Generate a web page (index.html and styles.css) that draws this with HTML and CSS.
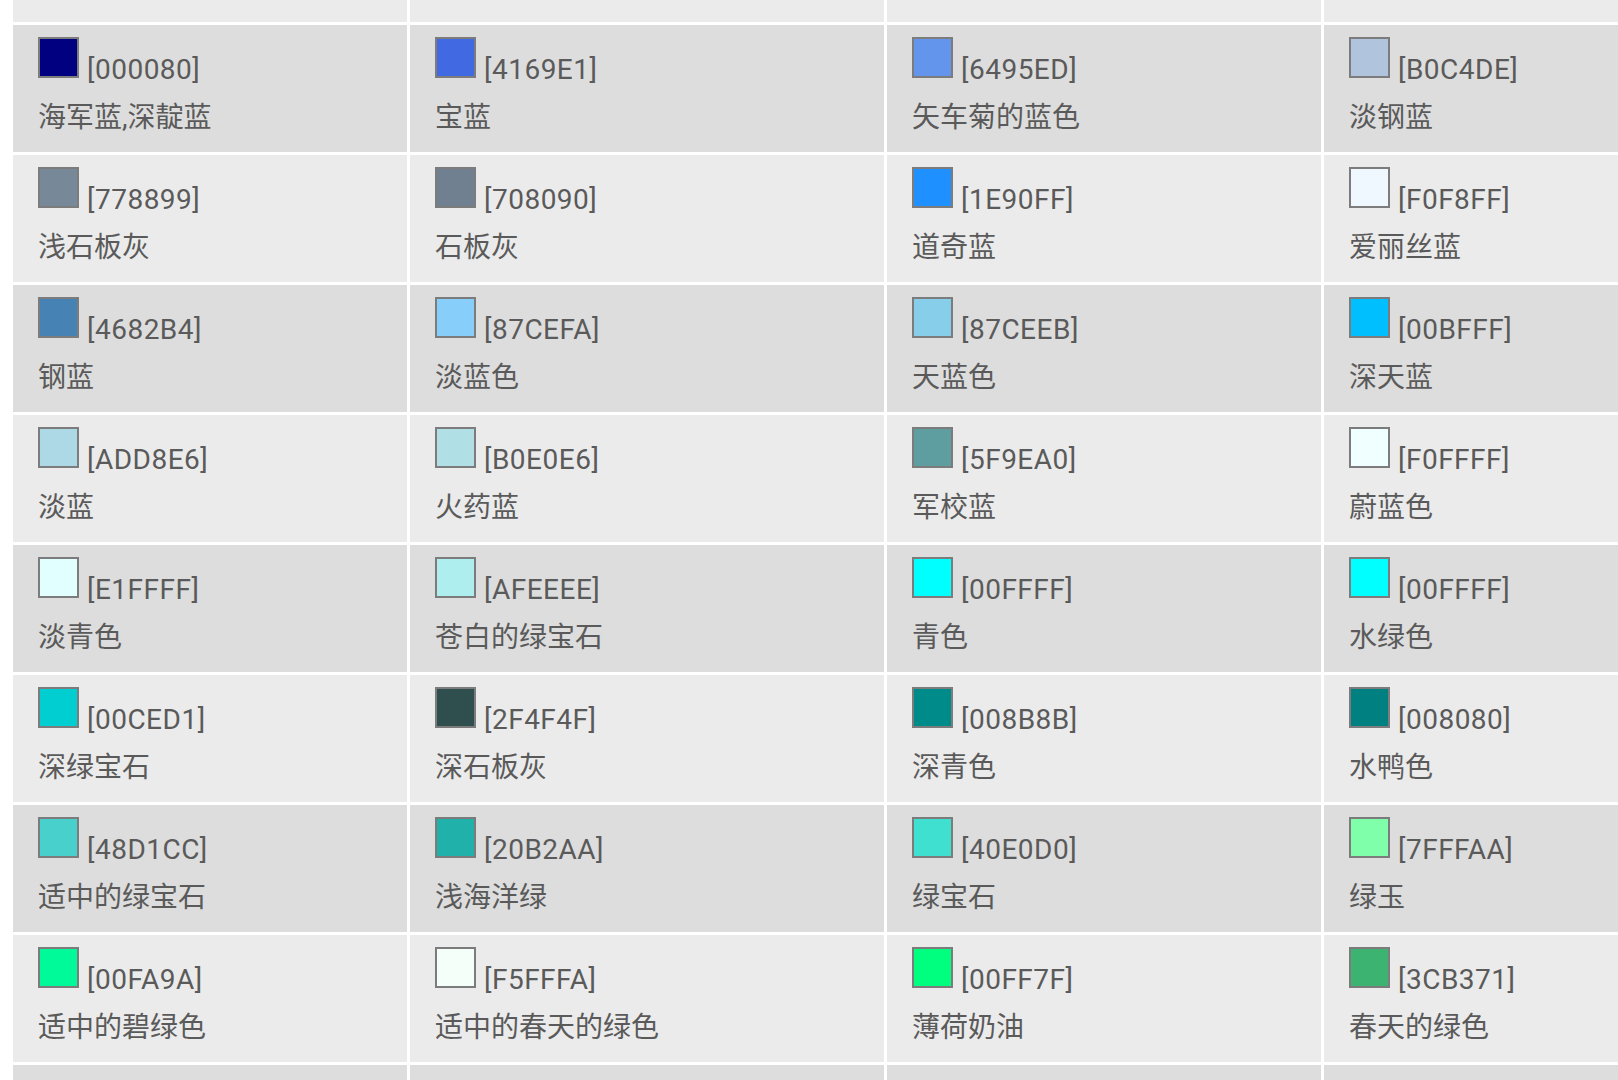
FILE: index.html
```html
<!DOCTYPE html>
<html lang="zh-CN">
<head>
<meta charset="utf-8">
<title>颜色表</title>
<link rel="stylesheet" href="styles.css">
</head>
<body>
<div class="table">
  <div class="cell light spacer"></div><div class="cell light spacer"></div><div class="cell light spacer"></div><div class="cell light spacer"></div>

  <div class="cell dark"><div class="line"><span class="sw" style="background:#000080"></span><span class="code">[000080]</span></div><div class="name">海军蓝,深靛蓝</div></div>
  <div class="cell dark"><div class="line"><span class="sw" style="background:#4169E1"></span><span class="code">[4169E1]</span></div><div class="name">宝蓝</div></div>
  <div class="cell dark"><div class="line"><span class="sw" style="background:#6495ED"></span><span class="code">[6495ED]</span></div><div class="name">矢车菊的蓝色</div></div>
  <div class="cell dark"><div class="line"><span class="sw" style="background:#B0C4DE"></span><span class="code">[B0C4DE]</span></div><div class="name">淡钢蓝</div></div>

  <div class="cell light"><div class="line"><span class="sw" style="background:#778899"></span><span class="code">[778899]</span></div><div class="name">浅石板灰</div></div>
  <div class="cell light"><div class="line"><span class="sw" style="background:#708090"></span><span class="code">[708090]</span></div><div class="name">石板灰</div></div>
  <div class="cell light"><div class="line"><span class="sw" style="background:#1E90FF"></span><span class="code">[1E90FF]</span></div><div class="name">道奇蓝</div></div>
  <div class="cell light"><div class="line"><span class="sw" style="background:#F0F8FF"></span><span class="code">[F0F8FF]</span></div><div class="name">爱丽丝蓝</div></div>

  <div class="cell dark"><div class="line"><span class="sw" style="background:#4682B4"></span><span class="code">[4682B4]</span></div><div class="name">钢蓝</div></div>
  <div class="cell dark"><div class="line"><span class="sw" style="background:#87CEFA"></span><span class="code">[87CEFA]</span></div><div class="name">淡蓝色</div></div>
  <div class="cell dark"><div class="line"><span class="sw" style="background:#87CEEB"></span><span class="code">[87CEEB]</span></div><div class="name">天蓝色</div></div>
  <div class="cell dark"><div class="line"><span class="sw" style="background:#00BFFF"></span><span class="code">[00BFFF]</span></div><div class="name">深天蓝</div></div>

  <div class="cell light"><div class="line"><span class="sw" style="background:#ADD8E6"></span><span class="code">[ADD8E6]</span></div><div class="name">淡蓝</div></div>
  <div class="cell light"><div class="line"><span class="sw" style="background:#B0E0E6"></span><span class="code">[B0E0E6]</span></div><div class="name">火药蓝</div></div>
  <div class="cell light"><div class="line"><span class="sw" style="background:#5F9EA0"></span><span class="code">[5F9EA0]</span></div><div class="name">军校蓝</div></div>
  <div class="cell light"><div class="line"><span class="sw" style="background:#F0FFFF"></span><span class="code">[F0FFFF]</span></div><div class="name">蔚蓝色</div></div>

  <div class="cell dark"><div class="line"><span class="sw" style="background:#E1FFFF"></span><span class="code">[E1FFFF]</span></div><div class="name">淡青色</div></div>
  <div class="cell dark"><div class="line"><span class="sw" style="background:#AFEEEE"></span><span class="code">[AFEEEE]</span></div><div class="name">苍白的绿宝石</div></div>
  <div class="cell dark"><div class="line"><span class="sw" style="background:#00FFFF"></span><span class="code">[00FFFF]</span></div><div class="name">青色</div></div>
  <div class="cell dark"><div class="line"><span class="sw" style="background:#00FFFF"></span><span class="code">[00FFFF]</span></div><div class="name">水绿色</div></div>

  <div class="cell light"><div class="line"><span class="sw" style="background:#00CED1"></span><span class="code">[00CED1]</span></div><div class="name">深绿宝石</div></div>
  <div class="cell light"><div class="line"><span class="sw" style="background:#2F4F4F"></span><span class="code">[2F4F4F]</span></div><div class="name">深石板灰</div></div>
  <div class="cell light"><div class="line"><span class="sw" style="background:#008B8B"></span><span class="code">[008B8B]</span></div><div class="name">深青色</div></div>
  <div class="cell light"><div class="line"><span class="sw" style="background:#008080"></span><span class="code">[008080]</span></div><div class="name">水鸭色</div></div>

  <div class="cell dark"><div class="line"><span class="sw" style="background:#48D1CC"></span><span class="code">[48D1CC]</span></div><div class="name">适中的绿宝石</div></div>
  <div class="cell dark"><div class="line"><span class="sw" style="background:#20B2AA"></span><span class="code">[20B2AA]</span></div><div class="name">浅海洋绿</div></div>
  <div class="cell dark"><div class="line"><span class="sw" style="background:#40E0D0"></span><span class="code">[40E0D0]</span></div><div class="name">绿宝石</div></div>
  <div class="cell dark"><div class="line"><span class="sw" style="background:#7FFFAA"></span><span class="code">[7FFFAA]</span></div><div class="name">绿玉</div></div>

  <div class="cell light"><div class="line"><span class="sw" style="background:#00FA9A"></span><span class="code">[00FA9A]</span></div><div class="name">适中的碧绿色</div></div>
  <div class="cell light"><div class="line"><span class="sw" style="background:#F5FFFA"></span><span class="code">[F5FFFA]</span></div><div class="name">适中的春天的绿色</div></div>
  <div class="cell light"><div class="line"><span class="sw" style="background:#00FF7F"></span><span class="code">[00FF7F]</span></div><div class="name">薄荷奶油</div></div>
  <div class="cell light"><div class="line"><span class="sw" style="background:#3CB371"></span><span class="code">[3CB371]</span></div><div class="name">春天的绿色</div></div>

  <div class="cell dark"></div><div class="cell dark"></div><div class="cell dark"></div><div class="cell dark"></div>
</div>
</body>
</html>
```
FILE: styles.css
```css
html, body {
  margin: 0;
  padding: 0;
  background: #ffffff;
  overflow: hidden;
}

body {
  width: 1618px;
  height: 1080px;
  font-family: Roboto, "Noto Sans CJK SC", sans-serif;
  color: #5a5a5a;
}

.table {
  display: grid;
  grid-template-columns: 394px 474px 434px 320px;
  grid-template-rows: 22px;
  grid-auto-rows: 127px;
  row-gap: 3px;
  column-gap: 3px;
  margin-left: 13px;
}

.cell {
  padding: 12px 0 0 25px;
  box-sizing: border-box;
  overflow: hidden;
}

.spacer {
  padding: 0;
}

.dark {
  background: #dddddd;
}

.light {
  background: #ebebeb;
}

.line {
  font-size: 28px;
  line-height: 28px;
  white-space: nowrap;
}

.sw {
  display: inline-block;
  width: 41px;
  height: 41px;
  box-sizing: border-box;
  border: 2px solid #7c7c7c;
  margin-right: 8px;
  margin-bottom: 1px;
  vertical-align: baseline;
}

.code {
  font-size: 28px;
  letter-spacing: 0.5px;
}

.name {
  font-size: 28px;
  line-height: 28px;
  margin-top: 20px;
  white-space: nowrap;
}
```
